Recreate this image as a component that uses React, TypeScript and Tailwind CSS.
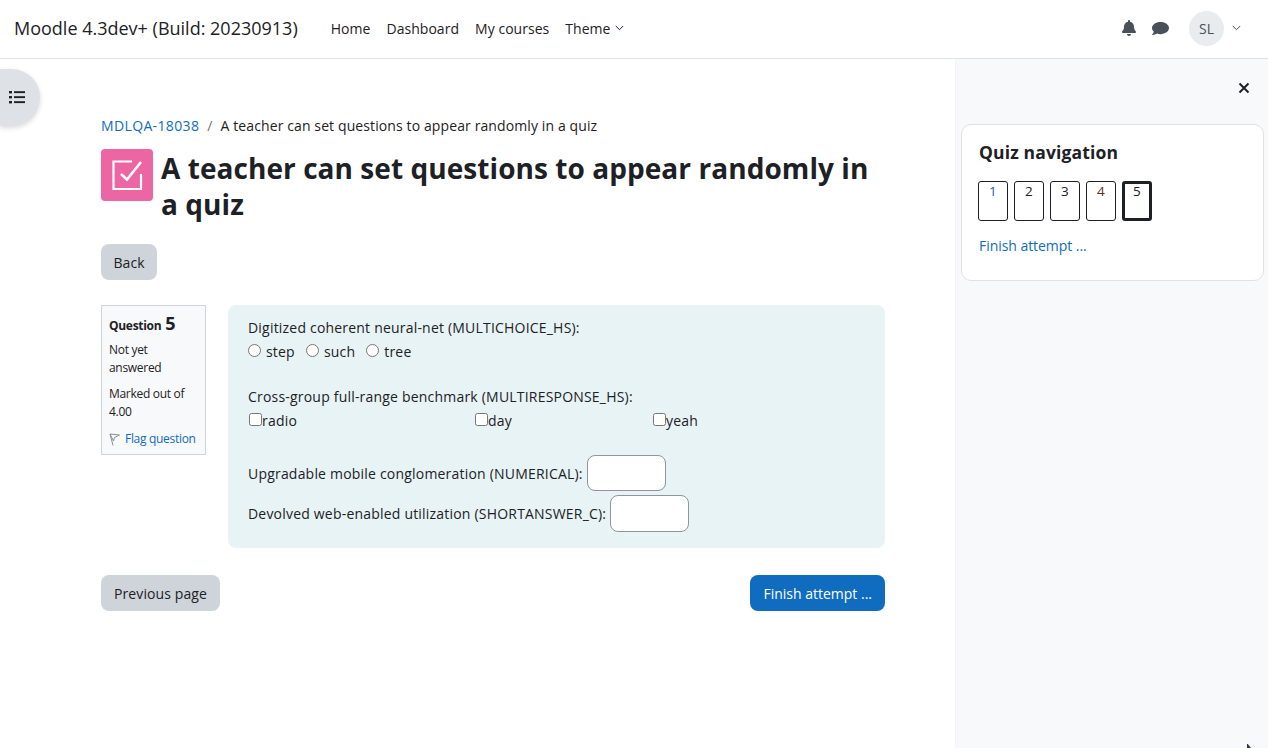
import React from "react";

const font = { fontFamily: '"Open Sans", "Noto Sans", sans-serif' };

function Bell() {
  return (
    <svg width="14" height="16" viewBox="0 0 448 512" fill="#495057">
      <path d="M224 512c35.32 0 63.97-28.65 63.97-64H160.03c0 35.35 28.65 64 63.97 64zm215.39-149.71c-19.32-20.76-55.47-51.99-55.47-154.29 0-77.7-54.48-139.9-127.94-155.16V32c0-17.67-14.32-32-31.98-32s-31.98 14.33-31.98 32v20.84C118.56 68.1 64.08 130.3 64.08 208c0 102.3-36.15 133.53-55.47 154.29-6 6.45-8.66 14.16-8.61 21.71.11 16.4 12.98 32 32.1 32h383.8c19.12 0 32-15.6 32.1-32 .05-7.55-2.61-15.27-8.61-21.71z" />
    </svg>
  );
}

function Chat() {
  return (
    <svg width="17" height="15" viewBox="0 0 512 512" fill="#495057" preserveAspectRatio="none">
      <path d="M256 32C114.6 32 0 125.1 0 240c0 49.6 21.4 95 57 130.7C44.5 421.1 2.7 466 2.2 466.5c-2.2 2.3-2.8 5.7-1.5 8.7S4.8 480 8 480c66.3 0 116-31.8 140.6-51.4 32.7 12.3 69 19.4 107.4 19.4 141.4 0 256-93.1 256-208S397.4 32 256 32z" />
    </svg>
  );
}

function QuizIcon() {
  return (
    <svg width="32" height="32" viewBox="0 0 32 32" fill="none" stroke="#fff" strokeWidth="2.2">
      <path d="M30 15V30H2.5V2.5H21" />
      <path d="M10 15L16 20.5L30 3" strokeWidth="2.6" />
    </svg>
  );
}

function NavBox({ n, current, color }: { n: number; current?: boolean; color: string }) {
  return (
    <div
      className={
        current
          ? "w-[30px] h-10 rounded-[3px] border-[3px] border-[#1d2125] bg-white flex justify-center text-[13.5px] leading-[14px]"
          : "w-[30px] h-10 rounded-[3px] border border-[#1d2125] bg-white flex justify-center pt-[2px] text-[13.5px] leading-[14px]"
      }
      style={{ color }}
    >
      {n}
    </div>
  );
}

function Radio({ label }: { label: string }) {
  return (
    <span className="flex items-center">
      <span className="w-[13px] h-[13px] rounded-full border border-[#767676] bg-white mr-[5px] -mt-[2px]" />
      <span>{label}</span>
    </span>
  );
}

function Check({ label, className }: { label: string; className: string }) {
  return (
    <span className={`flex items-center ${className}`}>
      <span className="w-[13px] h-[13px] rounded-[2.5px] border border-[#767676] bg-white -mt-[2px]" />
      <span>{label}</span>
    </span>
  );
}

export default function App() {
  return (
    <div
      className="relative w-[1268px] h-[748px] overflow-hidden bg-white text-[#1d2125] text-[14px] tracking-[0.04px]"
      style={font}
    >
      <header className="flex items-center h-[59px] border-b border-[#dee2e6] pl-[14px] pr-[27px] pb-[2px]">
        <span className="text-[18px] tracking-normal">Moodle 4.3dev+ (Build: 20230913)</span>
        <nav className="flex items-center gap-4 ml-[33px]">
          <span>Home</span>
          <span>Dashboard</span>
          <span>My courses</span>
          <span className="flex items-center gap-[4px]">
            Theme
            <svg width="9" height="6" viewBox="0 0 9 6" fill="none" stroke="#1d2125" strokeWidth="1">
              <path d="M0.8 1L4.5 4.7L8.2 1" />
            </svg>
          </span>
        </nav>
        <div className="flex items-center ml-auto">
          <Bell />
          <span className="ml-[16px] flex"><Chat /></span>
          <span className="ml-[20px] w-[35px] h-[35px] rounded-full bg-[#e9ecef] flex items-center justify-center text-[#495057] text-[14px]">
            SL
          </span>
          <svg className="ml-[8px]" width="9" height="6" viewBox="0 0 9 6" fill="none" stroke="#495057" strokeWidth="1">
            <path d="M0.8 1L4.5 4.7L8.2 1" />
          </svg>
        </div>
      </header>

      <div className="flex h-[689px]">
        <main className="w-[955px] pl-[101px] pt-[56px]">
          <div className="w-[784px]">
            <div className="flex items-center h-[20px] gap-[8px]">
              <span className="text-[#0f6cbf] tracking-[0.36px]">MDLQA-18038</span>
              <span className="text-[#6a737b]">/</span>
              <span className="tracking-[0.11px]">A teacher can set questions to appear randomly in a quiz</span>
            </div>
            <div className="flex mt-[14px]">
              <div className="w-[52px] h-[52px] shrink-0 rounded-[4px] bg-[#eb66a2] flex items-center justify-center">
                <QuizIcon />
              </div>
              <h1 className="ml-2 text-[28px] leading-[36px] font-bold mt-[1px] tracking-[0.06px] text-[#1d2125]">
                A teacher can set questions to appear randomly in a quiz
              </h1>
            </div>
            <div className="mt-[22px] inline-flex items-center h-9 px-[12.5px] rounded-[8px] bg-[#ced4da]">Back</div>

            <div className="flex mt-[25px] items-start">
              <aside className="w-[105px] h-[150px] shrink-0 border border-[#ced4da] bg-[#f8f9fa] px-[7px] pt-[8px] text-[12px] tracking-[-0.3px] leading-[18px]">
                <div className="font-bold flex items-baseline h-[22px]">
                  Question <span className="ml-[4px] text-[18px] tracking-normal">5</span>
                </div>
                <div className="mt-[5px]">Not yet answered</div>
                <div className="mt-[8px]">Marked out of 4.00</div>
                <div className="flex items-center mt-[9px] text-[#0f6cbf]">
                  <svg className="mr-[5px]" width="11" height="13" viewBox="0 0 11 13" fill="none" stroke="#8a8f94" strokeWidth="1">
                    <path d="M1 1L4 12.5M1 1L10.5 2L5.5 4.5L4.5 8Z" />
                  </svg>
                  Flag question
                </div>
              </aside>

              <section className="ml-[22px] w-[657px] h-[243px] rounded-[8px] bg-[#e7f3f5] pl-5 pt-[12px] tracking-[0.2px]">
                <div className="leading-[21px]">Digitized coherent neural-net (MULTICHOICE_HS):</div>
                <div className="flex gap-[11px] leading-[21px] mt-[3px]">
                  <Radio label="step" />
                  <Radio label="such" />
                  <Radio label="tree" />
                </div>
                <div className="leading-[21px] mt-[24px]">Cross-group full-range benchmark (MULTIRESPONSE_HS):</div>
                <div className="flex leading-[21px] mt-[3px]">
                  <Check label="radio" className="w-[226px] ml-[1px]" />
                  <Check label="day" className="w-[178px]" />
                  <Check label="yeah" className="" />
                </div>
                <div className="flex items-center mt-[24px] gap-1">
                  <span>Upgradable mobile conglomeration (NUMERICAL):</span>
                  <span className="w-[79px] h-9 rounded-[8px] border border-[#8f959e] bg-white" />
                </div>
                <div className="flex items-center mt-1 gap-1">
                  <span>Devolved web-enabled utilization (SHORTANSWER_C):</span>
                  <span className="w-[79px] h-[37px] rounded-[8px] border border-[#8f959e] bg-white" />
                </div>
              </section>
            </div>

            <div className="flex justify-between mt-[27px]">
              <div className="flex items-center h-9 px-[13px] rounded-[8px] bg-[#ced4da] tracking-[0.1px]">Previous page</div>
              <div className="flex items-center h-9 px-[13px] rounded-[8px] bg-[#0f6cbf] text-white tracking-[0px]">Finish attempt ...</div>
            </div>
          </div>
        </main>

        <aside className="w-[313px] bg-[#f8f9fa] border-l border-[#f1f2f3] pl-[5px] pr-[4px]">
          <div className="flex justify-end h-[65px] pt-[21px] pr-[12px]">
            <svg width="16" height="16" viewBox="0 0 16 16" fill="none" stroke="#1d2125" strokeWidth="2">
              <path d="M3.5 3.5L12.5 12.5M12.5 3.5L3.5 12.5" />
            </svg>
          </div>
          <div className="h-[157px] rounded-[10px] border border-[#dee2e6] bg-white px-[17px] pt-[14px]">
            <div className="text-[17.5px] font-bold leading-[26px] tracking-[0.15px]">Quiz navigation</div>
            <div className="flex gap-[6px] mt-[16px] -ml-[1px]">
              <NavBox n={1} color="#1f5f9f" />
              <NavBox n={2} color="#1d2125" />
              <NavBox n={3} color="#1d2125" />
              <NavBox n={4} color="#5a3020" />
              <NavBox n={5} color="#1d2125" current />
            </div>
            <div className="mt-[14px] text-[#0f6cbf] tracking-[-0.05px]">Finish attempt ...</div>
          </div>
        </aside>
      </div>

      <div className="absolute left-0 top-[69px] w-10 h-[57px] rounded-r-full bg-[#dee2e6] shadow-[0_2px_5px_rgba(0,0,0,0.15)] flex items-center pl-[9px]">
        <svg className="-mt-[1px]" width="16" height="14" viewBox="0 0 16 14" fill="#1d2125">
          <rect x="0" y="1" width="3" height="2.4" />
          <rect x="0" y="6" width="3" height="2.4" />
          <rect x="0" y="11" width="3" height="2.4" />
          <rect x="5" y="1.2" width="11" height="1.9" />
          <rect x="5" y="6.2" width="11" height="1.9" />
          <rect x="5" y="11.2" width="11" height="1.9" />
        </svg>
      </div>

      <svg className="absolute left-[1247px] top-[744px]" width="5" height="4" viewBox="0 0 5 4" fill="#33363a">
        <path d="M0 0V4H4L0.8 0Z" />
      </svg>
    </div>
  );
}
